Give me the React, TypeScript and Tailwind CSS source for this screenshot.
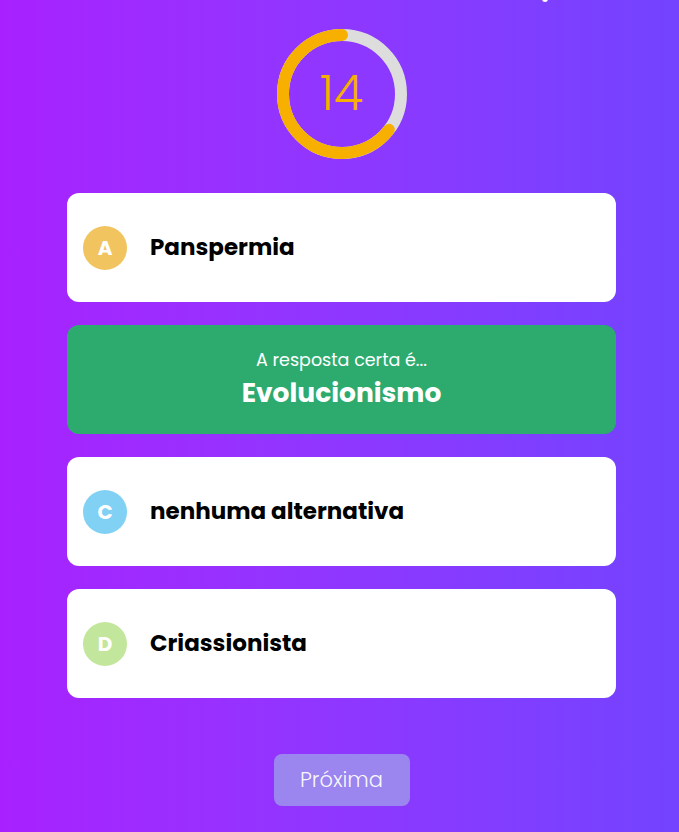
const options = [
  { letter: 'A', text: 'Panspermia', color: 'bg-[#f1c45f]' },
  { letter: 'B', text: 'Evolucionismo', color: 'bg-[#f08a8a]', correct: true },
  { letter: 'C', text: 'nenhuma alternativa', color: 'bg-[#80d1f3]' },
  { letter: 'D', text: 'Criassionista', color: 'bg-[#c2e69c]' },
];

function Timer({ value, fraction }: { value: number; fraction: number }) {
  const r = 59;
  const c = 2 * Math.PI * r;
  return (
    <div className="relative w-[132px] h-[132px]">
      <svg width="132" height="132" viewBox="0 0 132 132">
        <circle cx="66" cy="66" r={r} fill="none" stroke="#dddddd" strokeWidth="12" />
        <circle
          cx="66"
          cy="66"
          r={r}
          fill="none"
          stroke="#f7b000"
          strokeWidth="12"
          strokeLinecap="round"
          strokeDasharray={`${c * fraction} ${c}`}
          transform="rotate(-90 66 66) scale(1 -1) translate(0 -132)"
        />
      </svg>
      <div className="absolute inset-0 flex items-center justify-center text-[48px] font-light text-[#f7b000] font-['Poppins','Lato',sans-serif]">
        {value}
      </div>
    </div>
  );
}

export default function App() {
  return (
    <div className="relative min-h-[832px] w-full bg-gradient-to-r from-[#a820ff] to-[#7343ff] flex flex-col items-center pt-[28px] pl-[4px] font-['Poppins','DejaVu_Sans',sans-serif]">
      <div className="absolute top-[-4px] left-[542px] w-[6px] h-[6px] rounded-full bg-white" />
      <Timer value={14} fraction={0.645} />

      <div className="mt-[33px] w-[549px] flex flex-col gap-[23px]">
        {options.map((o) =>
          o.correct ? (
            <div
              key={o.letter}
              className="h-[109px] rounded-[12px] bg-[#2dab6f] flex flex-col items-center justify-center text-white"
            >
              <span className="text-[17.5px] leading-[26px]">A resposta certa é...</span>
              <span className="text-[26.5px] leading-[40px] font-bold">{o.text}</span>
            </div>
          ) : (
            <div key={o.letter} className="h-[109px] rounded-[12px] bg-white flex items-center pl-[16px]">
              <div
                className={`w-[44px] h-[44px] rounded-full ${o.color} flex items-center justify-center text-white text-[20px] font-bold`}
              >
                {o.letter}
              </div>
              <span className="ml-[23px] text-[23px] font-bold text-black">{o.text}</span>
            </div>
          )
        )}
      </div>

      <button className="mt-[56px] w-[136px] h-[52px] rounded-[8px] bg-[#9a86ee] text-white/95 text-[21px] font-light">
        Próxima
      </button>
    </div>
  );
}
